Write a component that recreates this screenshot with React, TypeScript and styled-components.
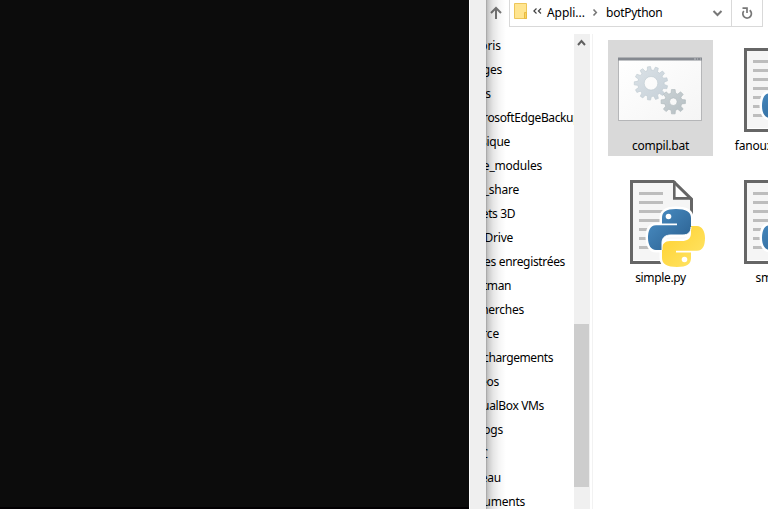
import React from 'react';
import styled, { createGlobalStyle } from 'styled-components';

const GlobalStyle = createGlobalStyle`
  * { box-sizing: border-box; }
  html, body { margin: 0; overflow: hidden; background: #fff; }
  body { font: 12px/24px "Noto Sans", "Open Sans", sans-serif; color: #000; }
  svg { display: block; flex: none; }
`;

const Desktop = styled.div`
  display: flex;
  width: 768px;
  height: 509px;
  overflow: hidden;
`;
const ConsoleWindow = styled.div`
  display: flex;
  flex: 0 0 486px;
`;
const ConsoleScreen = styled.div`
  flex: 0 0 469px;
  background: #0c0c0c;
  border-bottom: 2px solid #020002;
`;
const ConsoleScroll = styled.div`
  flex: 1;
  background: #efefef;
  border-left: 1px solid #fff;
`;
const Explorer = styled.div`
  position: relative;
  display: flex;
  flex-direction: column;
  flex: 0 0 282px;
  overflow: hidden;
  background: #fff;
`;
const WindowShadow = styled.div`
  position: absolute;
  inset: 0 auto 0 0;
  width: 20px;
  pointer-events: none;
  background: linear-gradient(to right, rgba(0,0,0,.4) 0, rgba(0,0,0,.26) 1px, rgba(0,0,0,.19) 3px, rgba(0,0,0,.1) 7px, rgba(0,0,0,.04) 13px, transparent 20px);
`;
const NavBar = styled.div`
  display: flex;
  flex: 0 0 34px;
  align-items: flex-start;
`;
const UpButton = styled.div`
  width: 23px;
  padding: 6px 0 0 4px;
`;
const AddressBar = styled.div`
  display: flex;
  align-items: center;
  width: 254px;
  height: 27px;
  border: 1px solid #d9d9d9;
  border-top: 0;
`;
const PathPart = styled.span<{ $w: number; $spacing: number }>`
  width: ${p => p.$w}px;
  letter-spacing: ${p => p.$spacing}px;
  white-space: nowrap;
  padding-bottom: 1px;
`;
const Refresh = styled.div`
  display: flex;
  align-items: center;
  justify-content: center;
  width: 31px;
  height: 26px;
  margin-left: auto;
  border-left: 1px solid #d9d9d9;
`;
const Body = styled.div`
  display: flex;
  flex: 1;
  min-height: 0;
`;
const Tree = styled.div`
  flex: 0 0 88px;
  overflow: hidden;
`;
const TreeRow = styled.div<{ $end: number; $spacing: number }>`
  display: flex;
  justify-content: flex-end;
  width: ${p => p.$end}px;
  height: 24px;
  letter-spacing: ${p => p.$spacing}px;
  white-space: nowrap;
`;
const Scrollbar = styled.div`
  display: flex;
  flex-direction: column;
  flex: 0 0 16px;
  background: #f0f0f0;
`;
const ScrollArrow = styled.div`
  height: 290px;
  padding: 5px 0 0 3px;
`;
const Thumb = styled.div`
  width: 15px;
  height: 163px;
  background: #cdcdcd;
`;
const Files = styled.div`
  display: grid;
  grid-template-columns: 105px 105px;
  grid-auto-rows: 116px;
  gap: 16px 9px;
  flex: 1;
  margin-left: 2px;
  padding: 6px 0 0 15px;
  border-left: 1px solid #f2f2f2;
`;
const Tile = styled.div<{ $selected?: boolean }>`
  display: flex;
  flex-direction: column;
  align-items: center;
  padding-top: 6px;
  background: ${p => (p.$selected ? '#d9d9d9' : 'transparent')};
`;
const FileName = styled.div<{ $spacing: number }>`
  margin-top: -2px;
  letter-spacing: ${p => p.$spacing}px;
  white-space: nowrap;
`;

const rows: [string, number, number][] = [
  ['Favoris', 15, -0.1],
  ['Images', 16, -0.2],
  ['Links', 5, -0.1],
  ['MicrosoftEdgeBackups', 99.5, -0.38],
  ['Musique', 24, -0.3],
  ['node_modules', 56, -0.2],
  ['_share', 33, -0.25],
  ['Objets 3D', 29, -0.4],
  ['OneDrive', 27, -0.25],
  ['Parties enregistrées', 79, -0.33],
  ['Postman', 25, -0.4],
  ['Recherches', 38, -0.25],
  ['Source', 13, -0.2],
  ['Téléchargements', 67, -0.4],
  ['Vidéos', 13, -0.3],
  ['VirtualBox VMs', 58, -0.35],
  ['vlogs', 17, -0.2],
  ['PC', 2, 0],
  ['Bureau', 15, -0.2],
  ['Documents', 39, -0.25],
];

function gear(cx: number, cy: number, outer: number, inner: number, hole: number, teeth: number, turn: number) {
  const step = (Math.PI * 2) / teeth;
  const pts: string[] = [];
  for (let i = 0; i < teeth; i++) {
    const shape: [number, number][] = [[-0.32, inner], [-0.19, outer], [0.19, outer], [0.32, inner]];
    for (const [offset, r] of shape) {
      const a = (i + offset) * step + turn;
      pts.push(`${(cx + Math.cos(a) * r).toFixed(2)} ${(cy + Math.sin(a) * r).toFixed(2)}`);
    }
  }
  return `M${pts.join('L')}ZM${cx - hole} ${cy}a${hole} ${hole} 0 1 0 ${hole * 2} 0a${hole} ${hole} 0 1 0 ${-hole * 2} 0Z`;
}

const BatchIcon = () => (
  <svg width="105" height="90" viewBox="0 0 105 90">
    <defs>
      <linearGradient id="page" x2="1" y2="1"><stop stopColor="#fff" /><stop offset="1" stopColor="#f5f5f5" /></linearGradient>
      <linearGradient id="gear" x2="1" y2="1"><stop stopColor="#dbe2e7" /><stop offset="1" stopColor="#c6d0d8" /></linearGradient>
      <linearGradient id="gear2" x2="1" y2="1"><stop stopColor="#ccd3d6" /><stop offset="1" stopColor="#b6bfc3" /></linearGradient>
    </defs>
    <g transform="translate(9 0)">
      <path fill="#b5b6b8" d="M1 12h84v63H1z" />
      <path fill="url(#page)" d="M2 14h82v60H2z" />
      <path fill="#858990" d="M1 11.5h84v3H1z" />
      <path stroke="#bfc1c4" d="M77 13h2m1 0h1m2 0h1" />
      <path fill="url(#gear)" stroke="#bdc9d0" strokeWidth=".6" strokeLinejoin="round" fillRule="evenodd" d={gear(34, 37.3, 16.8, 13.2, 6.8, 13, 0.24)} />
      <path fill="url(#gear2)" stroke="#adb7bb" strokeWidth=".6" strokeLinejoin="round" fillRule="evenodd" d={gear(56.3, 55.7, 12.3, 8.8, 3.8, 8, 0)} />
    </g>
  </svg>
);

const snakeTop = 'M28 0C18 0 14 3 14 9v5.5h15v1.7H8C2 16.2 0 22 0 29s3 12 8 12h6v-7c0-6 4-8 9-8h12c5 0 8-3 8-8V9c0-6-5-9-15-9Z';

const PythonFileIcon = () => (
  <svg width="105" height="90" viewBox="0 0 105 90">
    <defs>
      <linearGradient id="blue" x2="1" y2="1"><stop stopColor="#4c91c8" /><stop offset="1" stopColor="#285c8b" /></linearGradient>
      <linearGradient id="yellow" x1="1" y1="1" x2="0" y2="0"><stop stopColor="#ffd02c" /><stop offset="1" stopColor="#ffe66b" /></linearGradient>
    </defs>
    <path fill="#f5f5f5" d="M22 2h43l20 20v60H22z" />
    <path fill="#fff" d="M66 3v18h18z" />
    <path fill="none" stroke="#666" strokeWidth="3" d="M83.5 72V21.1L65.4 3.5H23.5v81H76" />
    <path fill="none" stroke="#666" strokeWidth="2.6" d="M66.3 3v17.4h17" />
    {[14, 23, 32, 41, 50, 59, 68].map(y => <path key={y} fill="#bdbdbd" d={`M31 ${y}h24v3H31z`} />)}
    <g transform="translate(40 31)">
      <g fill="#fff" stroke="#fff" strokeWidth="5" strokeLinejoin="round">
        <path d={snakeTop} />
        <path transform="rotate(180 28.5 29)" d={snakeTop} />
      </g>
      <path fill="url(#blue)" d={snakeTop} />
      <path fill="url(#yellow)" transform="rotate(180 28.5 29)" d={snakeTop} />
      <circle cx="20.5" cy="7.5" r="2.8" fill="#fff" />
      <circle cx="36.5" cy="50.5" r="2.8" fill="#fff" />
      <path fill="none" stroke="#fff" strokeWidth="1" d="M14 41v-7c0-6 4-8 9-8h12c5 0 8-3 8-8" />
    </g>
  </svg>
);

const PythonFile = ({ name, spacing }: { name: string; spacing: number }) => (
  <Tile><PythonFileIcon /><FileName $spacing={spacing}>{name}</FileName></Tile>
);

export default function App() {
  return (
    <>
      <GlobalStyle />
      <Desktop>
        <ConsoleWindow><ConsoleScreen /><ConsoleScroll /></ConsoleWindow>
        <Explorer>
          <NavBar>
            <UpButton>
              <svg width="12" height="14" fill="none" stroke="#777" strokeWidth="2"><path d="M6 13V2M1 7l5-5 5 5" /></svg>
            </UpButton>
            <AddressBar>
              <svg width="37" height="27" viewBox="0 0 37 27">
                <path fill="#ffe590" stroke="#edc65a" d="M4.5 3.5h12v15h-12z" />
                <path fill="#fbd461" stroke="#e8bb43" d="M14.5 12.5h2v6h-2z" />
                <path fill="none" stroke="#444" strokeWidth="1.2" d="M26.5 8.5l-2.6 2.5 2.6 2.5M31 8.5l-2.6 2.5 2.6 2.5" />
              </svg>
              <PathPart $w={45} $spacing={-0.05}>Appli...</PathPart>
              <svg width="14" height="26" fill="none" stroke="#777" strokeWidth="1.6"><path d="M1.5 9.5l2.8 3-2.8 3" /></svg>
              <PathPart $w={106} $spacing={-0.25}>botPython</PathPart>
              <svg width="11" height="26" fill="none" stroke="#777" strokeWidth="2"><path d="M1.5 11l4 4 4-4" /></svg>
              <Refresh>
                <svg width="12" height="14" fill="none" stroke="#777" strokeWidth="1.7"><path d="M2.8 5A4.3 4.3 0 1 0 8.7 4.3M1.5 2.2H6V7" /></svg>
              </Refresh>
            </AddressBar>
          </NavBar>
          <Body>
            <Tree>
              {rows.map(([name, end, spacing]) => <TreeRow key={name} $end={end} $spacing={spacing}>{name}</TreeRow>)}
            </Tree>
            <Scrollbar>
              <ScrollArrow><svg width="9" height="8" fill="none" stroke="#606060" strokeWidth="2"><path d="M1 6l3.5-4L8 6" /></svg></ScrollArrow>
              <Thumb />
            </Scrollbar>
            <Files>
              <Tile $selected><BatchIcon /><FileName $spacing={-0.25}>compil.bat</FileName></Tile>
              <PythonFile name="fanouxbot2.py" spacing={-0.15} />
              <PythonFile name="simple.py" spacing={-0.35} />
              <PythonFile name="sms.py" spacing={-0.2} />
            </Files>
          </Body>
          <WindowShadow />
        </Explorer>
      </Desktop>
    </>
  );
}
